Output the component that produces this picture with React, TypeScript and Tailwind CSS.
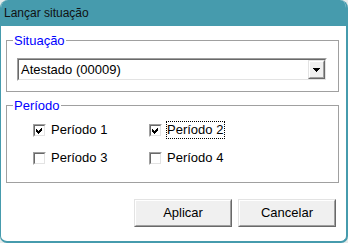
import React from "react";

const Check = () => (
  <svg width="9" height="9" viewBox="0 0 9 9" shapeRendering="crispEdges">
    <path d="M1 3 L3 5 L7 1 L7 4 L3 8 L1 6 Z" fill="#000" />
  </svg>
);

const CheckBox = ({ label, checked, focused }: { label: string; checked?: boolean; focused?: boolean }) => (
  <div className="flex items-center h-[18px]">
    <div className="w-[13px] h-[13px] border border-t-[#a0a0a0] border-l-[#a0a0a0] border-b-white border-r-white">
      <div className="w-full h-full border border-t-[#696969] border-l-[#696969] border-b-[#e3e3e3] border-r-[#e3e3e3] bg-white flex items-center justify-center">
        {checked && <Check />}
      </div>
    </div>
    <span
      className={
        focused
          ? "ml-[4px] h-[18px] pr-[1px] flex items-center border border-dotted border-black"
          : "ml-[4px] h-[18px] pr-[1px] flex items-center border border-transparent"
      }
    >
      {label}
    </span>
  </div>
);

const Button = ({ children }: { children: React.ReactNode }) => (
  <div className="w-[98px] h-[28px] border border-t-[#e3e3e3] border-l-[#e3e3e3] border-b-[#696969] border-r-[#696969]">
    <div className="w-full h-full border border-t-white border-l-white border-b-[#a0a0a0] border-r-[#a0a0a0] bg-[#f0f0f0] flex items-center justify-center">
      {children}
    </div>
  </div>
);

export default function App() {
  return (
    <div className="w-[348px] h-[243px] bg-[#e6eceb]">
      <div className="w-full h-full rounded-t-[8px] rounded-b-[7px] border-l border-r-2 border-b-2 border-[#469bad] bg-white flex flex-col overflow-hidden font-['Liberation_Sans',Arial,sans-serif] text-[13px] text-black">
        {/* Barra de título */}
        <div className="h-[26px] shrink-0 bg-[#469bad] flex items-center pl-[3px] text-[12px] text-[#111]">
          Lançar situação
        </div>

        <div className="pl-[5px] flex flex-col">
          {/* Situação */}
          <fieldset className="mt-[7px] w-[333px] border border-[#a0a0a0] pl-[6px] pt-[10px] pb-[10px]">
            <legend className="px-[1px] text-[#0000ff] leading-[15px]">Situação</legend>
            <div className="ml-[4px] w-[310px] h-[23px] border border-t-[#a0a0a0] border-l-[#a0a0a0] border-b-white border-r-white">
              <div className="w-full h-full border border-t-[#696969] border-l-[#696969] border-b-[#e3e3e3] border-r-[#e3e3e3] bg-white flex items-center">
                <span className="flex-1 pl-[2px]">Atestado (00009)</span>
                <div className="w-[17px] h-full border border-t-[#e3e3e3] border-l-[#e3e3e3] border-b-[#696969] border-r-[#696969]">
                  <div className="w-full h-full border border-t-white border-l-white border-b-[#a0a0a0] border-r-[#a0a0a0] bg-[#f0f0f0] flex items-center justify-center">
                    <svg width="7" height="4" viewBox="0 0 7 4" shapeRendering="crispEdges">
                      <path d="M0 0 H7 L3.5 4 Z" fill="#000" />
                    </svg>
                  </div>
                </div>
              </div>
            </div>
          </fieldset>

          {/* Período */}
          <fieldset className="mt-[6px] w-[333px] border border-[#a0a0a0] pl-[6px] pt-[8px] pb-[15px]">
            <legend className="px-[1px] text-[#0000ff] leading-[15px]">Período</legend>
            <div className="ml-[20px] grid grid-cols-[116px_auto] gap-y-[10px]">
              <CheckBox label="Período 1" checked />
              <CheckBox label="Período 2" checked focused />
              <CheckBox label="Período 3" />
              <CheckBox label="Período 4" />
            </div>
          </fieldset>

          {/* Botões */}
          <div className="mt-[16px] flex justify-end gap-[6px] pr-[10px]">
            <Button>Aplicar</Button>
            <Button>Cancelar</Button>
          </div>
        </div>
      </div>
    </div>
  );
}
